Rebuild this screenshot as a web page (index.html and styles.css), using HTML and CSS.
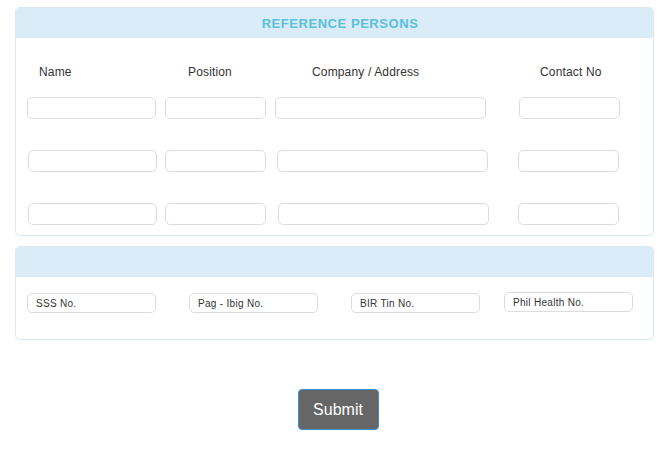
FILE: index.html
```html
<!DOCTYPE html>
<html>
<head>
<meta charset="utf-8">
<link rel="stylesheet" href="styles.css">
</head>
<body>
<div class="page">
  <section class="panel">
    <div class="panel-head"><span class="title">REFERENCE PERSONS</span></div>
    <div class="panel-body refs">
      <div class="lbl l1">Name</div>
      <div class="lbl l2">Position</div>
      <div class="lbl l3">Company / Address</div>
      <div class="lbl l4">Contact No</div>

      <input class="inp w1" type="text">
      <input class="inp w2" type="text">
      <input class="inp w3" type="text">
      <input class="inp w4" type="text">

      <input class="inp w1 s1" type="text">
      <input class="inp w2" type="text">
      <input class="inp w3 s2" type="text">
      <input class="inp w4 s-1" type="text">

      <input class="inp w1 s1" type="text">
      <input class="inp w2" type="text">
      <input class="inp w3 s3" type="text">
      <input class="inp w4 s-1" type="text">
    </div>
  </section>

  <section class="panel second">
    <div class="panel-head"></div>
    <div class="panel-body ids">
      <input class="inp small" type="text" placeholder="SSS No.">
      <input class="inp small" type="text" placeholder="Pag - Ibig No.">
      <input class="inp small" type="text" placeholder="BIR Tin No.">
      <input class="inp small up" type="text" placeholder="Phil Health No.">
    </div>
  </section>

  <div class="actions">
    <button class="submit" type="button">Submit</button>
  </div>
</div>
</body>
</html>
```
FILE: styles.css
```css
* { box-sizing: border-box; }
html, body { margin: 0; padding: 0; background: #fff; }
body {
  font-family: "Liberation Sans", Arial, sans-serif;
  color: #333;
  font-size: 12px;
}
.page {
  padding: 7px 13px 0 15px;
}
.panel {
  border: 1px solid #dbe8f0;
  border-radius: 5px;
  overflow: hidden;
}
.panel.second { margin-top: 10px; }
.panel-head {
  height: 30px;
  background: #d9ecf7;
  display: flex;
  align-items: center;
  justify-content: center;
  padding-left: 11px;
}
.title {
  font-size: 13px;
  font-weight: bold;
  color: #5bc0de;
  letter-spacing: 0.55px;
}
.refs {
  display: grid;
  grid-template-columns: 138px 110px 244px 1fr;
  row-gap: 31px;
  padding: 27px 0 10px 11px;
  align-items: start;
}
.lbl {
  line-height: 14px;
  height: 14px;
  margin-bottom: -13px;
  letter-spacing: 0.15px;
}
.l1 { padding-left: 12px; }
.l2 { padding-left: 23px; }
.l3 { padding-left: 37px; }
.l4 { padding-left: 21px; }
.inp {
  display: block;
  height: 22px;
  border: 1px solid #dcdcdc;
  border-radius: 5px;
  background: #fff;
  margin: 0;
  padding: 0 8px;
  font-family: "Liberation Sans", Arial, sans-serif;
  font-size: 10px;
  letter-spacing: 0.3px;
  color: #333;
  outline: none;
}
.inp::placeholder { color: #333; opacity: 1; }
.w1 { width: 129px; }
.w2 { width: 101px; }
.w3 { width: 211px; }
.w4 { width: 101px; }
.s1 { margin-left: 1px; }
.s2 { margin-left: 2px; }
.s3 { margin-left: 3px; }
.s-1 { margin-left: -1px; }
.ids {
  display: grid;
  grid-template-columns: 162px 162px 153px 1fr;
  padding: 16px 0 26px 11px;
  align-items: start;
}
.inp.small {
  width: 129px;
  height: 20px;
}
.inp.up { margin-top: -1px; }
.actions {
  display: flex;
  justify-content: center;
  padding-left: 7px;
  margin-top: 49px;
}
.submit {
  width: 81px;
  height: 41px;
  background: #666;
  color: #fff;
  border: 1px solid #3d8fd8;
  border-radius: 4px;
  font-family: "Liberation Sans", Arial, sans-serif;
  font-size: 16px;
  padding: 0;
}
```
